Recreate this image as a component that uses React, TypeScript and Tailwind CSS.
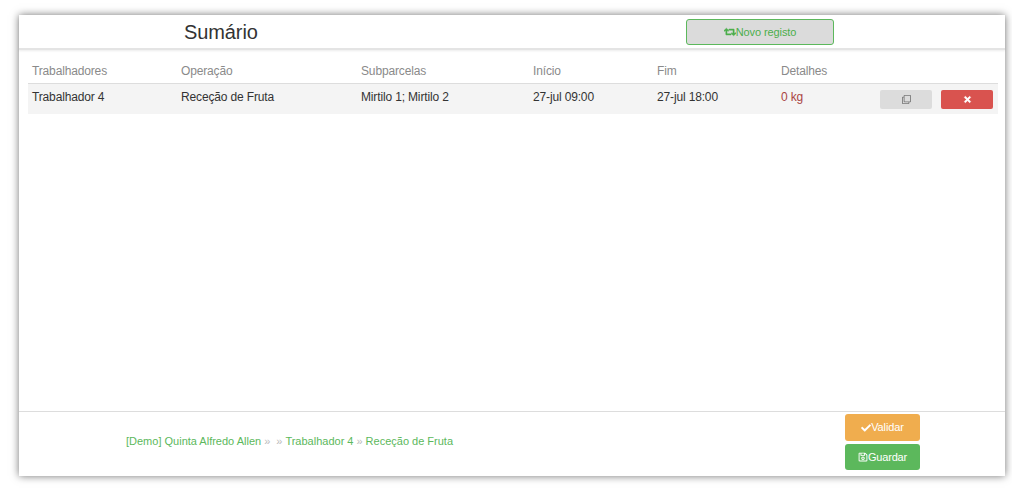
import { FaRetweet, FaCheck, FaRegSave, FaTimes, FaRegClone } from "react-icons/fa";

const font = { fontFamily: '"Liberation Sans", Arial, sans-serif' };

const cols = "grid grid-cols-[149px_180px_172px_124px_124px_99px_52px_61px] items-center pl-[4px]";

export default function App() {
  return (
    <div className="h-[489px] w-[1012px] overflow-hidden bg-white pl-[19px] pt-[15px]" style={font}>
      <div className="flex h-[461px] w-[986px] flex-col bg-white shadow-[0_0_8px_rgba(0,0,0,0.55)]">
        <header className="flex h-[35px] items-center border-b-[2px] border-[#e4e4e4] shadow-[0_1px_2px_rgba(0,0,0,0.08)]">
          <h1 className="ml-[165px] w-[502px] pt-[1px] text-[20px] leading-none tracking-[-0.1px] text-[#333]">Sumário</h1>
          <button className="mt-[1px] flex h-[26px] w-[148px] items-center justify-center rounded-[3px] border border-[#5cb85c] bg-[#dbdbdb] text-[11px] tracking-[-0.1px] text-[#4cae4c]">
            <FaRetweet className="text-[12px]" stroke="currentColor" strokeWidth={24} />
            Novo registo
          </button>
        </header>

        <main className="flex-1 pl-[9px] pr-[7px] pt-[11px]">
          <div className={`${cols} h-[23px] border-b border-[#ddd] pb-[3px] text-[12px] tracking-[-0.15px] text-[#8a8a8a]`}>
            <div>Trabalhadores</div>
            <div>Operação</div>
            <div>Subparcelas</div>
            <div>Início</div>
            <div>Fim</div>
            <div className="col-span-3">Detalhes</div>
          </div>
          <div className={`${cols} h-[30px] bg-[#f4f4f4] text-[12px] tracking-[-0.15px] text-[#333]`}>
            <div className="pb-[4px]">Trabalhador 4</div>
            <div className="pb-[4px]">Receção de Fruta</div>
            <div className="pb-[4px]">Mirtilo 1; Mirtilo 2</div>
            <div className="pb-[4px]">27-jul 09:00</div>
            <div className="pb-[4px]">27-jul 18:00</div>
            <div className="pb-[4px] text-[#a94442]">0 kg</div>
            <button className="flex h-[19px] w-[52px] items-center justify-center rounded-[2px] bg-[#dcdcdc] text-[#777]">
              <FaRegClone className="text-[9px]" />
            </button>
            <button className="ml-[9px] flex h-[19px] w-[52px] items-center justify-center rounded-[2px] bg-[#d9534f] text-white">
              <FaTimes className="text-[9px]" stroke="currentColor" strokeWidth={30} />
            </button>
          </div>
        </main>

        <footer className="flex h-[65px] border-t border-[#ddd]">
          <nav className="ml-[107px] flex w-[719px] items-center gap-[3px] pb-[6px] text-[11px] text-[#5cb85c]">
            <span>[Demo] Quinta Alfredo Allen</span>
            <span className="text-[#bbb]">»</span>
            <span className="ml-[3px] text-[#bbb]">»</span>
            <span>Trabalhador 4</span>
            <span className="text-[#bbb]">»</span>
            <span>Receção de Fruta</span>
          </nav>
          <div className="flex flex-col gap-[3px] pt-[2px]">
            <button className="flex h-[27px] w-[75px] items-center justify-center rounded-[3px] bg-[#f0ad4e] text-[11px] tracking-[-0.1px] text-white">
              <FaCheck className="text-[10px]" />
              Validar
            </button>
            <button className="flex h-[26px] w-[75px] items-center justify-center rounded-[3px] bg-[#5cb85c] text-[11px] tracking-[-0.2px] text-white">
              <FaRegSave className="text-[10px]" />
              Guardar
            </button>
          </div>
        </footer>
      </div>
    </div>
  );
}
